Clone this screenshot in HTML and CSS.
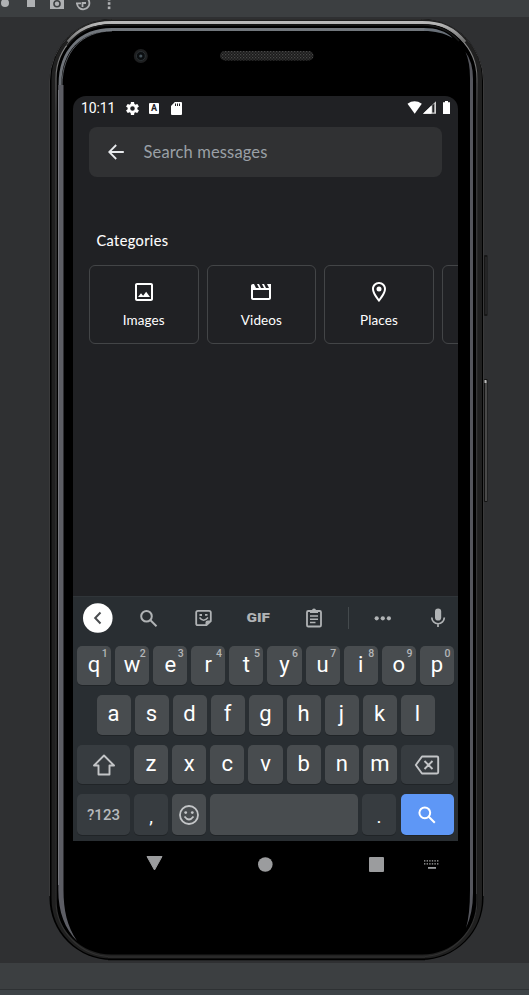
FILE: index.html
```html
<!DOCTYPE html>
<html lang="en">
<head>
<meta charset="utf-8">
<title>Search messages</title>
<link rel="stylesheet" href="styles.css">
</head>
<body>
<div class="window">
  <header class="toolbar">
    <svg width="130" height="17" viewBox="0 0 130 17" fill="#afb1b3">
      <circle cx="5" cy="3" r="4"/><rect x="27" y="-1" width="8" height="8"/>
      <path fill-rule="evenodd" d="M50 0h3l1-2h6l1 2h3v9H50zM57 0a3.8 3.8 0 1 0 0 7.600a3.800 3.800 0 0 0 0-7.600z"/><circle cx="57" cy="3.800" r="2.200"/>
      <g fill="none" stroke="#afb1b3" stroke-width="1.800"><path d="M77 3.500a6.200 6.200 0 1 0 4-6.200M82.500 7V3h3.500M76 3.300h5"/></g>
      <rect x="107.800" y="-2" width="2.600" height="2.600"/><rect x="107.800" y="2.200" width="2.600" height="2.600"/><rect x="107.800" y="6.500" width="2.600" height="2.600"/>
    </svg>
  </header>
  <main class="stage">
    <svg class="frame" width="529" height="946" viewBox="0 17 529 946" fill="none">
      <defs>
        <linearGradient id="rim" x1="0" y1="20" x2="0" y2="958" gradientUnits="userSpaceOnUse"><stop offset="0" stop-color="#a0a0a0"/><stop offset=".045" stop-color="#777"/><stop offset=".1" stop-color="#484849"/><stop offset="1" stop-color="#303030"/></linearGradient>
        <linearGradient id="shine" x1="0" y1="21" x2="0" y2="48" gradientUnits="userSpaceOnUse"><stop offset="0" stop-color="#bcbcbc"/><stop offset=".25" stop-color="#a8a8a8"/><stop offset="1" stop-color="#555"/></linearGradient>
        <linearGradient id="glass" x1="0" y1="28" x2="0" y2="200" gradientUnits="userSpaceOnUse"><stop offset="0" stop-color="#72777d"/><stop offset="1" stop-color="#606268"/></linearGradient>
        <pattern id="mesh" width="3" height="3" patternUnits="userSpaceOnUse"><rect width="3" height="3" fill="#1a1a1a"/><rect width="1.300" height="1.300" fill="#484848"/><rect x="1.500" y="1.500" width="1.300" height="1.300" fill="#3a3a3a"/></pattern>
      </defs>
      <rect x="484" y="255" width="3.500" height="61" rx="1" fill="#171717"/><path d="M486 257v57" stroke="#353536"/>
      <rect x="484" y="379" width="3.500" height="123" rx="1" fill="#141414"/><path d="M486 381v120" stroke="#6d6d6d" stroke-width="1.200"/><path d="M485.500 380v3" stroke="#bbb" stroke-width="2"/>
      <rect x="49.500" y="19" width="434" height="941" rx="62" fill="#000"/>
      <path d="M49.500 896V81A62 62 0 0 1 111.500 19.500H421.500A62 62 0 0 1 483.500 81V896" stroke="#3a3a3b"/>
      <rect x="53.500" y="21.500" width="426.500" height="935" rx="58" stroke="#202020" stroke-width="4"/>
      <rect x="56" y="22.500" width="421" height="934" rx="56" stroke="url(#rim)" stroke-width="1.200"/>
      <path d="M68 42C79 28 93 22.500 112 22.500H422C441 22.500 454 28 465 42" stroke="url(#shine)" stroke-width="3"/>
      <path d="M67 46C79 30 93 25 112 25H422C438 25 450 31 459 41" stroke="#171717" stroke-width="1.500"/>
      <path d="M60 878V84C60 51 80 29.500 112 29.500H425" stroke="url(#glass)" stroke-width="2.800"/>
      <path d="M62 86C62 52 82 31 112 31" stroke="#8d929a" stroke-width=".6"/>
      <path d="M58.300 85V890C58.300 912 65 929 77 941C67 926 63.500 910 63.500 890V85z" fill="#5c5d64"/>
      <path d="M58.500 90V885" stroke="#808188" stroke-width=".8"/>
      <path d="M424 28C436 28 446 31 452.500 38C444 33 435 31 424 31z" fill="#697078"/>
      <path d="M465.500 52Q470 62 470 78V890Q470 915 466 928Q473 913 473 893V79Q473 62 465.500 52z" fill="#55565d"/>
      <path d="M474 83V894" stroke="#000" stroke-width="2"/><path d="M476.500 83V894" stroke="#383839"/>
      <path d="M108 957H425" stroke="#292929" stroke-width="2.500"/><path d="M108 959.500H425" stroke="#000" stroke-width="1.500"/>
      <circle cx="140.800" cy="56" r="7" fill="#1e1f20"/><circle cx="140.800" cy="56" r="4.500" fill="#0b0e10" stroke="#2b3134"/><circle cx="140.800" cy="56" r="1.600" fill="#45525a"/>
      <rect x="220" y="51" width="93.500" height="9.500" rx="4.700" fill="url(#mesh)"/>
    </svg>
    <section class="screen">
      <div class="status">
        <span class="clock">10:11</span>
        <svg class="gear" width="13" height="13" viewBox="2 2 20 20" fill="#fff"><path d="M19.430 12.980c.04-.32.07-.64.07-.98s-.03-.66-.07-.98l2.110-1.650c.19-.15.24-.42.12-.64l-2-3.460c-.12-.22-.39-.3-.61-.22l-2.490 1c-.52-.4-1.080-.73-1.690-.98l-.38-2.650A.49.49 0 0 0 14 2h-4c-.25 0-.46.18-.49.42l-.38 2.650c-.61.25-1.170.59-1.690.98l-2.490-1c-.23-.09-.49 0-.61.22l-2 3.460c-.13.22-.07.49.12.64l2.110 1.650c-.04.32-.07.65-.07.98s.03.66.07.98l-2.110 1.650c-.19.15-.24.42-.12.64l2 3.460c.12.22.39.3.61.22l2.490-1c.52.4 1.080.73 1.690.98l.38 2.650c.03.24.24.42.49.42h4c.25 0 .46-.18.49-.42l.38-2.650c.61-.25 1.170-.59 1.690-.98l2.490 1c.23.09.49 0 .61-.22l2-3.460c.12-.22.07-.49-.12-.64zM12 15.500a3.500 3.500 0 1 1 0-7 3.500 3.500 0 0 1 0 7z"/></svg>
        <span class="a-badge">A</span>
        <svg width="11" height="13" viewBox="0 0 11 13"><path d="M3.800 0H10q1 0 1 1v11q0 1-1 1H1q-1 0-1-1V4z" fill="#fff"/><path d="M4.500 1.500v2.500M6.500 1.500v2.500M8.500 1.500v2.500" stroke="#202124"/></svg>
        <svg class="signals" width="44" height="14" viewBox="407 101 44 14" fill="#fff"><path d="M407.500 103.700q7-4.800 14.300 0L414.700 113.700z"/><path d="M423 113.800L436 101.300v12.500z" fill="#d0d0d0"/><path d="M423 113.800l8.500-8.200v8.200z"/><path d="M432.300 105.500l2-2v9h-2z" fill="#202124"/><path d="M445 101h3v1.200h2V114h-7v-11.800h2z"/></svg>
      </div>
      <div class="search">
        <svg width="16" height="16" viewBox="0 0 16 16" fill="none" stroke="#e8eaed" stroke-width="1.800"><path d="M15.800 8H1.500M8.200 1L1.200 8l7 7"/></svg>
        <span>Search messages</span>
      </div>
      <h2>Categories</h2>
      <div class="cards">
        <div class="card"><svg width="24" height="24" viewBox="0 0 24 24" fill="#fff"><path d="M19 5v14H5V5h14m0-2H5c-1.100 0-2 .9-2 2v14c0 1.100.9 2 2 2h14c1.100 0 2-.9 2-2V5c0-1.100-.9-2-2-2zm-4.860 8.860l-3 3.870L9 13.140 6 17h12z"/></svg><span>Images</span></div>
        <div class="card"><svg width="24" height="24" viewBox="0 0 24 24" fill="#fff"><path d="M18 4l2 4h-3l-2-4h-2l2 4h-3l-2-4H8l2 4H7L5 4H4c-1.100 0-2 .9-2 2v12c0 1.100.9 2 2 2h16c1.100 0 2-.9 2-2V4zM4 18v-8h16v8z"/></svg><span>Videos</span></div>
        <div class="card"><svg width="24" height="24" viewBox="0 0 24 24" fill="#fff"><path d="M12 2C8.130 2 5 5.130 5 9c0 5.250 7 13 7 13s7-7.750 7-13c0-3.870-3.130-7-7-7zM7 9c0-2.760 2.240-5 5-5s5 2.240 5 5c0 2.880-2.880 7.190-5 9.880C9.920 16.210 7 11.850 7 9z"/><circle cx="12" cy="9" r="2.500"/></svg><span>Places</span></div>
        <div class="card"></div>
      </div>
      <div class="keyboard">
        <svg class="tools" width="385" height="49" viewBox="73 597 385 49" fill="none" stroke="#b0b3b5" stroke-width="2">
          <circle cx="97.800" cy="618" r="14.800" fill="#fff" stroke="none"/><path d="M100.500 612.500l-5.300 5.500 5.300 5.500" stroke="#4a4d50"/>
          <circle cx="146.500" cy="616.200" r="5.300"/><path d="M150.500 620.200l6 6"/>
          <path d="M198 610.800h11q1.800 0 1.800 1.800v8.400l-4.300 4.200H198q-1.800 0-1.800-1.800v-10.800q0-1.800 1.800-1.800z" stroke-width="1.800"/><path d="M211 620.500h-3.500q-2 0-2 2v3z" fill="#b0b3b5" stroke="none"/><path d="M199.500 617.500q4 5.500 8.500 0" stroke-width="1.500"/><path d="M199.500 615h2.500M205 614.800h2.500" stroke-width="1.800"/>
          <text x="246.500" y="622.300" class="gif" textLength="23.500" lengthAdjust="spacingAndGlyphs">GIF</text>
          <rect x="307" y="611" width="14" height="15.500" rx="1.300" stroke-width="1.800"/><path d="M310 613v-2.500h2q0-2 2-2t2 2h2v2.500z" fill="#b0b3b5" stroke="none"/><path d="M310 616h8M310 619.200h8M310 622.500h5.500" stroke-width="1.600"/>
          <path d="M348.500 607v22" stroke="#444a4d" stroke-width="1"/>
          <g fill="#b0b3b5" stroke="none"><circle cx="376.700" cy="618.300" r="2.100"/><circle cx="382.800" cy="618.300" r="2.100"/><circle cx="388.900" cy="618.300" r="2.100"/><rect x="435" y="608.500" width="6.200" height="12" rx="3.100"/></g><path d="M431.800 617.500a6.200 6.200 0 0 0 12.500 0M438 623.500v3.500" stroke-width="1.700"/>
        </svg>
        <div class="keys r1"><b>q<i>1</i></b><b>w<i>2</i></b><b>e<i>3</i></b><b>r<i>4</i></b><b>t<i>5</i></b><b>y<i>6</i></b><b>u<i>7</i></b><b>i<i>8</i></b><b>o<i>9</i></b><b>p<i>0</i></b></div>
        <div class="keys r2"><b>a</b><b>s</b><b>d</b><b>f</b><b>g</b><b>h</b><b>j</b><b>k</b><b>l</b></div>
        <div class="keys r3">
          <b class="wide dark"><svg width="24" height="22" viewBox="0 0 24 22" fill="none" stroke="#c3c5c7" stroke-width="1.900" stroke-linejoin="round"><path d="M12 1.500L22 11.500h-4.500v9h-11v-9H2z"/></svg></b>
          <b>z</b><b>x</b><b>c</b><b>v</b><b>b</b><b>n</b><b>m</b>
          <b class="wide dark"><svg width="26" height="22" viewBox="0 0 26 22" fill="none" stroke="#c3c5c7" stroke-width="1.900" stroke-linejoin="round"><path d="M8 2.500h15q1.200 0 1.200 1.200v14.600q0 1.200-1.200 1.200H8L1.800 11zM10.500 7l8 8M18.500 7l-8 8"/></svg></b>
        </div>
        <div class="keys r4">
          <b class="wide dark sym">?123</b><b class="dark punct">,</b>
          <b><svg width="20" height="20" viewBox="0 0 20 20" fill="none" stroke="#c3c5c7" stroke-width="1.800"><circle cx="10" cy="10" r="9"/><path d="M5.500 11.500q4.500 6 9 0"/><g fill="#c3c5c7" stroke="none"><circle cx="6.700" cy="7.600" r="1.400"/><circle cx="13.300" cy="7.600" r="1.400"/></g></svg></b>
          <b class="space"></b><b class="dark punct">.</b>
          <b class="wide go"><svg width="18" height="18" viewBox="0 0 18 18" fill="none" stroke="#fff" stroke-width="2"><circle cx="6.800" cy="6.800" r="5.400"/><path d="M10.800 10.800l6 6"/></svg></b>
        </div>
      </div>
      <svg class="nav" width="385" height="48" viewBox="73 841 385 48" fill="#9b9c9e"><path d="M147 856.500h15l-7.500 13.500z" stroke="#9b9c9e" stroke-linejoin="round"/><circle cx="265.300" cy="864.500" r="7.300"/><rect x="369" y="857" width="15" height="15" rx="1"/><g fill="none" stroke="#aaa" stroke-width="1.200" stroke-dasharray="1.400 1.200"><path d="M424 860.800h15.500M424 863.800h15.500"/></g><rect x="428" y="867" width="8" height="1.800"/></svg>
    </section>
  </main>
  <footer class="bottom"><div></div></footer>
</div>
</body>
</html>
```
FILE: styles.css
```css
* { box-sizing: border-box; }
body { margin: 0; background: #2f3032; }
.window { width: 529px; height: 995px; display: flex; flex-direction: column; overflow: hidden; }
svg { display: block; flex: none; }
.toolbar { height: 17px; background: #3c3f41; }
.stage { position: relative; height: 946px; padding: 79px 0 0 73px; background: #2f3032; }
.frame { position: absolute; left: 0; top: 0; }
.screen { position: relative; width: 385px; height: 793px; display: flex; flex-direction: column; background: #202124; border-radius: 13px 13px 0 0; overflow: hidden; font-family: Lato, sans-serif; color: #fff; }
.status { height: 24px; flex: none; display: flex; align-items: center; padding: 0 7px 0 8px; font: 14px Roboto, sans-serif; }
.clock { width: 45px; letter-spacing: -.1px; }
.gear { margin-right: 10px; }
.a-badge { width: 10px; height: 11px; margin-right: 11.5px; background: #fff; color: #202124; border-radius: 1px; font: bold 9px/11px Roboto, sans-serif; text-align: center; }
.signals { margin-left: auto; }
.search { height: 50px; flex: none; margin: 7px 16px 0; padding: 0 0 1px 19px; display: flex; align-items: center; gap: 19.5px; background: #303133; border-radius: 8px; font-size: 16.5px; letter-spacing: .14px; color: #9aa0a6; }
h2 { margin: 53px 0 0 23.5px; height: 21px; flex: none; font-size: 14.500px; line-height: 21px; font-weight: 400; letter-spacing: .4px; -webkit-text-stroke: .1px #fff; }
.cards { display: flex; gap: 8px; margin: 14px 0 0 16px; }
.card { width: 109.6px; height: 79px; flex: none; display: flex; flex-direction: column; align-items: center; padding-top: 14px; border: 1px solid #434547; border-radius: 6px; font-size: 13.5px; line-height: 18px; letter-spacing: .1px; }
.card span { margin-top: 7px; }
.keyboard { height: 245px; flex: none; margin-top: auto; border-top: 1px solid #303539; background: #292e32; }
.keys { display: flex; gap: 4px; padding: 0 4px; margin-bottom: 10px; font-family: Roboto, sans-serif; }
.keys b { position: relative; flex: 1 1 0; display: flex; align-items: center; justify-content: center; background: #484c4f; border-radius: 5px; box-shadow: 0 1px #202427; font-size: 22px; line-height: 26px; font-weight: 400; padding-bottom: 2px; }
.r1 b { height: 39px; }
.r2 { padding: 0 23.5px; }
.r2 b { height: 40px; }
.r3 b { height: 39px; }
.r4 b { flex: 0 0 34px; height: 41px; padding-bottom: 0; }
.keys i { position: absolute; right: 3.5px; top: 1px; font-size: 10.5px; line-height: 13px; font-style: normal; font-weight: 500; color: #b4b6b8; }
.keys .wide { flex: 0 0 53px; padding: 0; }
.keys .dark { background: #373c40; }
.keys .space { flex: 0 0 148px; }
.keys .go { margin-left: auto; padding-right: 2px; background: #5e97f6; }
.keys .sym { font-size: 15px; font-weight: 500; color: #b7babc; }
.keys .punct { padding-top: 5px; font-size: 19px; }
.gif { font: 900 12px Roboto, sans-serif; fill: #b0b3b5; stroke: none; }
.nav { background: #000; }
.bottom { height: 32px; padding-top: 26px; background: #3c3f41; }
.bottom div { height: 6px; border-top: 1px solid #2e3133; background: #3d4347; }
```
